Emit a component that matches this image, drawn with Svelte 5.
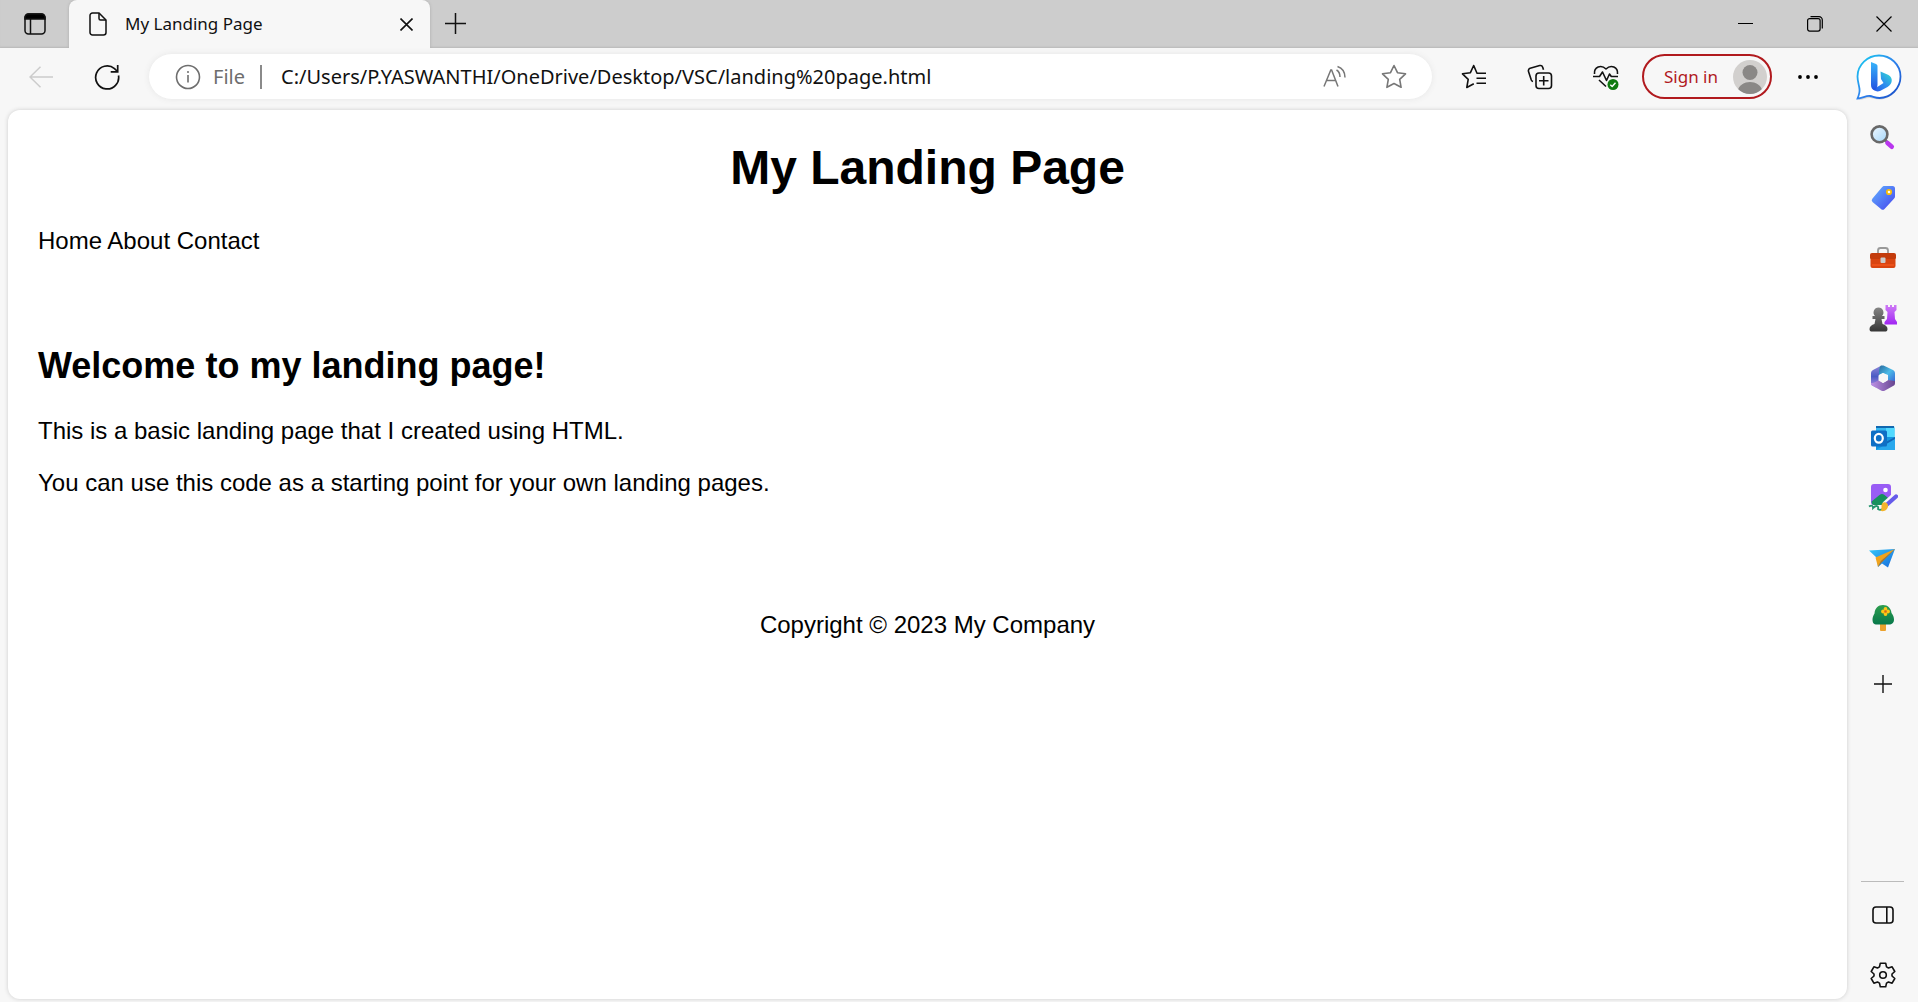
<script>
  let url = $state('C:/Users/P.YASWANTHI/OneDrive/Desktop/VSC/landing%20page.html');
</script>

<div class="browser">
  <header class="tabs">
    <button class="workspace" aria-label="Tab actions menu">
      <svg width="22" height="22" viewBox="0 0 22 22" fill="none" stroke="#111" stroke-width="1.5">
        <rect x="1" y="1" width="20" height="20" rx="3.5" />
        <path d="M1 6V4.500a3.500 3.500 0 0 1 3.500-3.500h13A3.500 3.500 0 0 1 21 4.500V6z" fill="#000" />
        <path d="M6.500 6v15" />
      </svg>
    </button>
    <div class="tab">
      <svg width="18" height="24" viewBox="0 0 18 24" fill="none" stroke="#111" stroke-width="1.500">
        <path d="M3.500 1H10l7 7v12.500a2.500 2.500 0 0 1-2.500 2.500h-11A2.500 2.500 0 0 1 1 20.500v-17A2.500 2.500 0 0 1 3.500 1z" />
        <path d="M10 1v5.500A1.500 1.500 0 0 0 11.500 8H17" />
      </svg>
      <span class="title">My Landing Page</span>
      <button class="close" aria-label="Close tab">
        <svg width="13" height="13" viewBox="0 0 13 13" stroke="#111" stroke-width="1.600"><path d="M.5.5l12 12M12.500.5l-12 12" /></svg>
      </button>
    </div>
    <button class="newtab" aria-label="New tab">
      <svg width="21" height="21" viewBox="0 0 21 21" stroke="#111" stroke-width="1.500"><path d="M10.500 0v21M0 10.500h21" /></svg>
    </button>
    <div class="window">
      <button aria-label="Minimize"><svg width="15" height="15" viewBox="0 0 15 15" stroke="#000"><path d="M0 7.500h15" /></svg></button>
      <button aria-label="Restore">
        <svg width="16" height="16" viewBox="0 0 16 16" fill="none" stroke="#000" stroke-width="1.200"><rect x=".6" y="2.600" width="12.500" height="12.500" rx="2" /><path d="M3.500 .7h8.500a3.300 3.300 0 0 1 3.300 3.300v8.500" /></svg>
      </button>
      <button aria-label="Close"><svg width="16" height="16" viewBox="0 0 16 16" stroke="#000" stroke-width="1.200"><path d="M.5.5l15 15M15.500.5l-15 15" /></svg></button>
    </div>
  </header>

  <div class="body">
    <div class="view">
      <div class="toolbar">
        <button aria-label="Back" disabled>
          <svg width="24" height="22" viewBox="0 0 24 22" fill="none" stroke="#ccc" stroke-width="1.500"><path d="M24 11H1M11.500.7L1 11l10.500 10.300" /></svg>
        </button>
        <button aria-label="Refresh">
          <svg width="26" height="26" viewBox="0 0 26 26" fill="none" stroke="#111" stroke-width="1.700"><path d="M24.500 11.500A11.500 11.500 0 1 1 20.500 4.600L23.500 7.500" /><path d="M23.700 1v6.800h-7" /></svg>
        </button>
        <div class="address">
          <svg width="26" height="26" viewBox="0 0 26 26" fill="none" stroke="#6e6e6e" stroke-width="1.600"><circle cx="13" cy="13" r="11.500" /><path d="M13 11v7.500" /><circle cx="13" cy="8" r=".6" fill="#6e6e6e" stroke-width="1" /></svg>
          <span class="scheme">File</span>
          <span class="bar"></span>
          <input aria-label="Address" bind:value={url} spellcheck="false" />
          <button aria-label="Read aloud">
            <svg width="24" height="24" viewBox="0 0 24 24" fill="none" stroke="#777" stroke-width="1.500"><path d="M2 21.500L8.800 5h.8L16 21.500M4.500 15.500h9.500" /><path d="M14.500 5c2.500 1.500 3.500 4 3.500 7" /><path d="M15.500 1.500c4.500 1.500 7.500 5.500 7.500 11" /></svg>
          </button>
          <button aria-label="Add to favorites">
            <svg width="26" height="25" viewBox="0 0 26 25" fill="none" stroke="#777" stroke-width="1.600" stroke-linejoin="round"><path d="M13 1.500l3.500 7.200 8 1.100-5.800 5.500 1.400 8-7.100-3.800-7.100 3.800 1.400-8L1.500 9.800l8-1.100z" /></svg>
          </button>
        </div>
        <button aria-label="Favorites">
          <svg width="26" height="25" viewBox="0 0 26 25" fill="none" stroke="#111" stroke-width="1.600" stroke-linejoin="round"><path d="M16 9.300L12.700 1.500 9.400 8.700l-7.900 1.100 5.700 5.500-1.400 8.200 7-3.800M15.500 9.300H25M15.500 14.300H25M15.500 19.300H25" /></svg>
        </button>
        <button aria-label="Collections">
          <svg width="26" height="26" viewBox="0 0 26 26" fill="none" stroke="#111" stroke-width="1.600" stroke-linejoin="round"><rect x="9" y="9" width="15.500" height="15.500" rx="3" /><path d="M16.700 12v9.500M12 16.700h9.500" /><path d="M6 17.500A2.500 2.500 0 0 1 4.300 16L1.500 7.500a2.500 2.500 0 0 1 1.700-3.200l9.500-2.700a2.500 2.500 0 0 1 3 1.600l.8 2.600" /></svg>
        </button>
        <button aria-label="Browser essentials">
          <svg width="26" height="26" viewBox="0 0 26 26" fill="none" stroke="#111" stroke-width="1.600" stroke-linejoin="round"><path d="M1.500 10C.8 3 8 0 13 5c5-5 12.200-2 11.500 5M0 12.500h6.500L9.500 8l4 8.500 3-6.500 1.800 2.500H25M6 16l7 6.500" /><circle cx="20" cy="20.500" r="5.500" fill="#0f7b10" stroke="none" /><path d="M17.300 20.700l1.900 1.800 3.300-3.700" stroke="#fff" stroke-width="1.400" /></svg>
        </button>
        <button class="signin">
          Sign in
          <svg width="34" height="34" viewBox="0 0 34 34"><defs><clipPath id="avatar"><circle cx="17" cy="17" r="17" /></clipPath></defs><circle cx="17" cy="17" r="17" fill="#d2d0ce" /><g clip-path="url(#avatar)" fill="#8a8886"><circle cx="17" cy="12.500" r="7.500" /><path d="M4.500 31c3-12 22-12 25 0L24 34H10z" /></g></svg>
        </button>
        <button aria-label="Settings and more"><svg width="20" height="4" viewBox="0 0 20 4"><circle cx="2" cy="2" r="1.900" /><circle cx="10" cy="2" r="1.900" /><circle cx="18" cy="2" r="1.900" /></svg></button>
      </div>

      <main class="page">
        <h1>My Landing Page</h1>
        <nav>Home About Contact</nav>
        <section>
          <h2>Welcome to my landing page!</h2>
          <p>This is a basic landing page that I created using HTML.</p>
          <p>You can use this code as a starting point for your own landing pages.</p>
        </section>
        <footer>Copyright © 2023 My Company</footer>
      </main>
    </div>

    <aside class="side">
      <button class="bing" aria-label="Bing">
        <svg width="46" height="48" viewBox="0 0 46 48">
          <defs>
            <linearGradient id="ring" x1="0" y1="0" x2="1" y2="1"><stop offset="0" stop-color="#16cff0" /><stop offset=".5" stop-color="#2f83ed" /><stop offset="1" stop-color="#1648c4" /></linearGradient>
            <linearGradient id="stem" x1="0" y1="0" x2="0" y2="1"><stop offset="0" stop-color="#37b4fa" /><stop offset="1" stop-color="#2250e0" /></linearGradient>
            <linearGradient id="bowl" x1="0" y1="1" x2="1" y2="0"><stop offset="0" stop-color="#2554e8" /><stop offset=".5" stop-color="#2c8eee" /><stop offset="1" stop-color="#33e0cf" /></linearGradient>
          </defs>
          <path d="M23.500 3C35 3 44.500 12 44.500 23.500S35 45.500 23.500 45.500c-4 0-6-1-9-1.500-4-.5-8 2-12 2 1-4 1.500-6 1.500-9C3.500 32 2 28 2 23.500 2 12 12 3 23.500 3z" fill="#aaa" opacity=".4" />
          <path d="M23 1.500C34.500 1.500 44.500 10.500 44.500 22.500S34.500 44 23.500 44c-4 0-6.500-1.500-9.500-2-4-.5-8 2.500-12.500 2.500 1.500-3.500 2.500-6 2-9.500C3 31 1.500 27 1.500 22.500 1.500 11 11.500 1.500 23 1.500z" fill="#fff" stroke="url(#ring)" stroke-width="1.800" />
          <path d="M24.500 17.500l8 3.500c5 3 4 9-1 12L24 37c-4 1.500-7-1-8-4l4.500.5 7-4.500-2.500-4z" fill="url(#bowl)" />
          <path d="M15 8l5 2c1 .5 1.500 1 1.500 2.500v18c0 3-1 4.500-3 6-2.500-1-3.500-3-3.500-5.500z" fill="url(#stem)" />
        </svg>
      </button>
      <button aria-label="Search">
        <svg width="28" height="28" viewBox="0 0 28 28"><defs><linearGradient id="lens" x1="0" y1="0" x2="1" y2="1"><stop offset="0" stop-color="#f0f8ff" /><stop offset="1" stop-color="#a5d6f8" /></linearGradient></defs><path d="M16 16l2.500 2.500" stroke="#777" stroke-width="3" /><circle cx="10.500" cy="10.300" r="7.900" fill="url(#lens)" stroke="#686868" stroke-width="2.600" /><path d="M18.500 19l4.300 3.800" stroke="#b936ee" stroke-width="4.500" stroke-linecap="round" /></svg>
      </button>
      <button aria-label="Shopping">
        <svg width="28" height="28" viewBox="0 0 28 28"><defs><linearGradient id="tag" x1="0" y1="0" x2="1" y2="1"><stop offset="0" stop-color="#63b4ff" /><stop offset="1" stop-color="#4543ed" /></linearGradient></defs><path d="M15.500 2h8a2.500 2.500 0 0 1 2.500 2.500V12c0 1.500-.3 2-1.300 3L15.500 25a2.500 2.500 0 0 1-3.500 0l-8.500-7a2.500 2.500 0 0 1 0-3.500L13 3.200c.8-.9 1.300-1.200 2.500-1.200z" fill="url(#tag)" /><circle cx="20" cy="8" r="2.200" fill="#fff" stroke="#f7bd0b" stroke-width="1.800" /></svg>
      </button>
      <button aria-label="Tools">
        <svg width="28" height="28" viewBox="0 0 28 28"><path d="M9 10V6.500A2.500 2.500 0 0 1 11.500 4h5A2.500 2.500 0 0 1 19 6.500V10" fill="none" stroke="#999" stroke-width="1.800" /><rect x="1.500" y="11" width="25" height="13" rx="2" fill="#d94511" /><path d="M3 9h22a2 2 0 0 1 2 2v2.500a1.500 1.500 0 0 1-1.500 1.500h-23A1.500 1.500 0 0 1 1 13.500V11a2 2 0 0 1 2-2z" fill="#c33c0d" /><path d="M3 20h22v2H3z" fill="#ec5019" /><rect x="11.500" y="13.500" width="5" height="5.500" rx="1" fill="#ccc" /></svg>
      </button>
      <button aria-label="Games">
        <svg width="28" height="28" viewBox="0 0 28 28"><defs><linearGradient id="pawn" x1="0" y1="0" x2="0" y2="1"><stop offset="0" stop-color="#858585" /><stop offset="1" stop-color="#363636" /></linearGradient><linearGradient id="rook" x1="0" y1="0" x2="0" y2="1"><stop offset="0" stop-color="#ce7bf5" /><stop offset="1" stop-color="#a126f3" /></linearGradient></defs><path d="M16.500 1h2.500v2h2V1h2v2h2V1h2.500v5l-2 2 .5 7 2 3v2.500H15.500V18l2.500-3 .5-7-2-2z" fill="url(#rook)" /><path d="M9.500 3.500a5 5 0 0 1 3.500 8.500h2.500v3h-3l1 5c3 1 5 2.500 5 5 0 2-1 2.500-2.500 2.500H3c-1.500 0-2.500-.5-2.500-2.500 0-2.500 2-4 5-5l1-5h-3v-3H6a5 5 0 0 1 3.500-8.500z" fill="url(#pawn)" /></svg>
      </button>
      <button aria-label="Microsoft 365">
        <svg width="28" height="28" viewBox="0 0 28 28"><defs><linearGradient id="m1" x1="0" y1="0" x2="0" y2="1"><stop offset="0" stop-color="#8f86d8" /><stop offset=".5" stop-color="#4a5cc4" /><stop offset="1" stop-color="#b48be0" /></linearGradient><linearGradient id="m2" x1="0" y1="0" x2="1" y2="1"><stop offset="0" stop-color="#276a9e" /><stop offset=".5" stop-color="#4bbbe8" /><stop offset="1" stop-color="#3561d5" /></linearGradient><linearGradient id="m3" x1="0" y1="0" x2="1" y2="0"><stop offset="0" stop-color="#bd91e6" /><stop offset="1" stop-color="#67458f" /></linearGradient></defs><path d="M12.500 1.500L4 6C2.500 7 2 8 2 9.500V19c0 1.500.5 2.500 2 3l3 1.500 3-2V8c0-3 1-5.500 2.500-6.500z" fill="url(#m1)" /><path d="M12 1.500h2.500L24 6c1.500 1 2 2 2 3.500V19l-7-3v-5l-5-2-4 2V7c0-2.500.5-4.500 2-5.500z" fill="url(#m2)" /><path d="M2 19c4 .5 7-3 8-3l4 3 5-3 7 1v2c0 1.500-.5 2.500-2 3l-8 4.500c-1.500.8-2.500.8-4 0L4 22c-1.500-.8-2-1.500-2-3z" fill="url(#m3)" /><path d="M14 9l4.500 2.500v5L14 19l-4.500-2.500v-5z" fill="#f7f7f7" /></svg>
      </button>
      <button aria-label="Outlook">
        <svg width="28" height="28" viewBox="0 0 28 28"><path d="M9 2h15a1.500 1.500 0 0 1 1.500 1.500V14H7V3.500A1.500 1.500 0 0 1 9 2z" fill="#35b8f1" /><path d="M7 2h18v2H7z" fill="#1268b0" /><path d="M17 4h8.500v10H17z" fill="#51d9ff" /><path d="M7 13h19v13H7z" fill="#1494df" /><path d="M26 13L15 19l11 7z" fill="#0f66b8" /><path d="M7 26l19-11v11z" fill="#29a8ed" /><rect x="2" y="6.500" width="16" height="16" rx="1.500" fill="#0f6fc5" /><ellipse cx="9.800" cy="14.300" rx="4" ry="4.400" fill="none" stroke="#fff" stroke-width="2.200" /></svg>
      </button>
      <button aria-label="Image creator">
        <svg width="30" height="28" viewBox="0 0 30 28"><rect x="3" y="0" width="20" height="21" rx="3" fill="#995cf5" /><path d="M3.500 17.500l8-6.500a4 4 0 0 1 5 0l6 5-5 5H6c-1.500 0-2.500-1-2.500-3.500z" fill="#16915d" /><circle cx="17.500" cy="6" r="2.300" fill="#fff" /><path d="M1 22.500c3-2 4-.5 4 1.500 3-3 6-2.500 5 1 2 1.500 3 1 4 0" fill="none" stroke="#24956d" stroke-width="1.800" /><path d="M17 21L28 11" stroke="#f7f7f7" stroke-width="7" /><path d="M19 20.500L28 12.500" stroke="#655bea" stroke-width="4.200" stroke-linecap="round" /><path d="M14.500 19c3-2 7 1 5 5-1.500 3-4 3.500-7 3 2-2 0-6 2-8z" fill="#f3b42b" /></svg>
      </button>
      <button aria-label="Drop">
        <svg width="28" height="28" viewBox="0 0 28 28"><defs><linearGradient id="plane" x1="0" y1="0" x2="1" y2="1"><stop offset="0" stop-color="#35c7f8" /><stop offset="1" stop-color="#1769db" /></linearGradient></defs><path d="M0 6.500L26 5l-7 18.500-6-4-4 3.500-1-9z" fill="url(#plane)" /><path d="M6.500 13.500L26 5 12 17l-3 6z" fill="#f0a31c" /><path d="M12 17L26 5 12.500 18.500l-3.500 4.500z" fill="#bd7215" /></svg>
      </button>
      <button aria-label="E-tree">
        <svg width="28" height="28" viewBox="0 0 28 28"><defs><linearGradient id="tree" x1="0" y1="0" x2="0" y2="1"><stop offset="0" stop-color="#2d9e4e" /><stop offset="1" stop-color="#08784b" /></linearGradient></defs><path d="M11 18h6v8a1 1 0 0 1-1 1h-4a1 1 0 0 1-1-1z" fill="#eca22d" /><path d="M14 1c5 0 8 3.500 8.500 8 1.500 2 2.500 4 2.500 6.500 0 3.500-2 5-5 5H8c-3.500 0-4.500-2-4.500-5 0-2 .8-4 2-6C6 4 9 1 14 1z" fill="url(#tree)" /><g fill="#ffc515"><circle cx="16.500" cy="5" r="1.900" /><circle cx="16.500" cy="10" r="1.900" /><circle cx="14" cy="7.500" r="1.900" /><circle cx="19" cy="7.500" r="1.900" /></g><circle cx="16.500" cy="7.500" r="1.200" fill="#dd6518" /></svg>
      </button>
      <button class="add" aria-label="Customize sidebar"><svg width="18" height="18" viewBox="0 0 18 18" stroke="#111" stroke-width="1.400"><path d="M9 0v18M0 9h18" /></svg></button>
      <div class="bottom">
        <button aria-label="Hide sidebar"><svg width="22" height="18" viewBox="0 0 22 18" fill="none" stroke="#111" stroke-width="1.600"><rect x="1" y="1" width="20" height="16" rx="3" /><path d="M14.800 1v16" /></svg></button>
        <button aria-label="Settings">
          <svg width="26" height="26" viewBox="0 0 26 26" fill="none" stroke="#111" stroke-width="1.600" stroke-linejoin="round"><path d="M10.300 1.200h5.400l.8 3.700 2 1.100 3.600-1.200 2.700 4.700-2.800 2.500v2l2.800 2.500-2.700 4.700-3.600-1.200-2 1.100-.8 3.700h-5.400l-.8-3.700-2-1.100-3.600 1.200-2.700-4.700L4 14v-2L1.200 9.500l2.700-4.700L7.500 6l2-1.100z" /><circle cx="13" cy="13" r="3.300" /></svg>
        </button>
      </div>
    </aside>
  </div>
</div>

<style>
  :global(body) { margin: 0; }
  .browser { min-height: 100vh; display: flex; flex-direction: column; background: #f7f7f7; font-family: "Segoe UI", "Noto Sans", sans-serif; color: #111; }
  button { border: 0; padding: 0; margin: 0; background: none; font: inherit; display: flex; align-items: center; justify-content: center; flex: none; }
  svg { flex: none; display: block; }

  .tabs { display: flex; height: 48px; background: #cdcdcd; box-shadow: inset 0 -2px 2px -1px #b8b8b8; }
  .workspace { width: 69px; }
  .tab { display: flex; align-items: center; width: 361px; box-sizing: border-box; padding-left: 20px; background: #f7f7f7; border-radius: 8px 8px 0 0; box-shadow: 0 0 3px #aaa; clip-path: inset(0 -4px 0 -4px); }
  .title { flex: 1; padding-left: 18px; font-size: 17px; line-height: 24px; }
  .close { width: 48px; height: 48px; }
  .newtab { width: 51px; height: 47px; }
  .window { display: flex; margin-left: auto; }
  .window button { width: 69px; height: 47px; }

  .body { flex: 1; display: flex; }
  .view { flex: 1; min-width: 0; display: flex; flex-direction: column; }
  .toolbar { display: flex; align-items: center; height: 57px; padding: 0 6px 5px 8px; }
  .toolbar > button { width: 66px; height: 45px; }
  .address { flex: 1; min-width: 0; display: flex; align-items: center; height: 45px; margin: 0 9px; padding-left: 26px; padding-right: 8px; box-sizing: border-box; border-radius: 23px; background: #fff; box-shadow: 0 0 6px #e6e6e6; }
  .scheme { width: 36px; padding-left: 12px; font-size: 20px; line-height: 28px; color: #6e6e6e; }
  .bar { width: 2px; height: 24px; margin-left: 11px; margin-right: 19px; background: #8a8a8a; }
  input { flex: 1; min-width: 0; border: 0; padding: 0; outline: 0; background: none; font: inherit; font-size: 20px; line-height: 28px; color: #111; }
  .address button { width: 60px; height: 45px; }
  .toolbar > .signin { width: 130px; box-sizing: border-box; margin: 0 3px; padding: 0 3px 0 20px; justify-content: space-between; border: 2px solid #b11a1e; border-radius: 23px; color: #b11a1e; font-size: 17px; }

  .page { flex: 1; margin: 0 0 3px 8px; padding: 30px; border-radius: 12px; background: #fff; box-shadow: 0 0 4px #ccc; font-family: "Liberation Sans", Arial, sans-serif; font-size: 24px; line-height: 27px; color: #000; }
  h1 { margin: 0 0 32px; font-size: 48px; line-height: 55px; text-align: center; }
  section { margin: 91px 0 115px; }
  h2 { margin: 0 0 30px; font-size: 36px; line-height: 42px; }
  p { margin: 0 0 25px; }
  footer { text-align: center; }

  .side { width: 71px; flex: none; display: flex; flex-direction: column; }
  .side button { height: 60px; }
  .side .bing { padding-right: 8px; }
  .side .add { margin-top: 6px; }
  .bottom { display: flex; flex-direction: column; gap: 6px; margin: auto 14px 0; padding-top: 6px; border-top: 1px solid #bbb; }
  .bottom button { height: 54px; }
</style>
